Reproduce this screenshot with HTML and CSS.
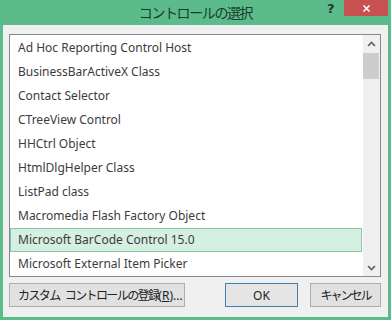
FILE: index.html
```html
<!DOCTYPE html>
<html lang="ja">
<head>
<meta charset="utf-8">
<link rel="stylesheet" href="styles.css">
</head>
<body>
<div class="window">
  <div class="titlebar">
    <div class="title">コントロールの選択</div>
    <div class="help">?</div>
    <div class="close">
      <svg width="12" height="12" viewBox="0 0 12 12"><path d="M2 2 L10 10 M10 2 L2 10" stroke="#fff" stroke-width="2" fill="none"/></svg>
    </div>
  </div>
  <div class="client">
    <div class="listbox">
      <ul class="items">
        <li>Ad Hoc Reporting Control Host</li>
        <li>BusinessBarActiveX Class</li>
        <li>Contact Selector</li>
        <li>CTreeView Control</li>
        <li>HHCtrl Object</li>
        <li>HtmlDlgHelper Class</li>
        <li>ListPad class</li>
        <li>Macromedia Flash Factory Object</li>
        <li class="selected">Microsoft BarCode Control 15.0</li>
        <li>Microsoft External Item Picker</li>
      </ul>
      <div class="scrollbar">
        <div class="arrow">
          <svg width="9" height="6" viewBox="0 0 9 6"><path d="M1 5 L4.5 1.5 L8 5" stroke="#606060" stroke-width="1.6" fill="none"/></svg>
        </div>
        <div class="track"><div class="thumb"></div></div>
        <div class="arrow">
          <svg width="9" height="6" viewBox="0 0 9 6"><path d="M1 1 L4.5 4.5 L8 1" stroke="#606060" stroke-width="1.6" fill="none"/></svg>
        </div>
      </div>
    </div>
    <div class="buttons">
      <button class="btn custom"><span class="jp">カスタム</span> <span class="jp">コントロールの登録</span>(<u>R</u>)...</button>
      <div class="spacer"></div>
      <button class="btn ok">OK</button>
      <button class="btn cancel"><span class="jp">キャンセル</span></button>
    </div>
  </div>
</div>
</body>
</html>
```
FILE: styles.css
```css
html, body {
  margin: 0;
  padding: 0;
}
body {
  width: 391px;
  height: 320px;
  background: #5bbb8b;
  font-family: "Noto Sans", "Noto Sans CJK JP", sans-serif;
  overflow: hidden;
}
.window {
  display: flex;
  flex-direction: column;
  height: 320px;
}
.titlebar {
  position: relative;
  height: 25px;
  flex: none;
}
.title {
  text-align: center;
  font-family: "Noto Sans CJK JP", sans-serif;
  font-size: 14px;
  letter-spacing: -1.4px;
  line-height: 25px;
  color: #1e3a2c;
}
.help {
  position: absolute;
  left: 327px;
  top: 2px;
  font-family: "DejaVu Sans", sans-serif;
  font-weight: bold;
  font-size: 13px;
  line-height: 13px;
  color: #1d3a2a;
}
.close {
  position: absolute;
  left: 344px;
  top: 0;
  width: 44px;
  height: 16px;
  background: #c75050;
  display: flex;
  align-items: center;
  justify-content: center;
}
.close svg {
  width: 9px;
  height: 9px;
}
.client {
  flex: 1;
  margin: 0 3px 3px 3px;
  background: #f0f0f0;
  padding: 9px 7px 10px 6px;
  display: flex;
  flex-direction: column;
  gap: 6px;
}
.listbox {
  height: 243px;
  box-sizing: border-box;
  border: 1px solid #828790;
  background: #fff;
  display: flex;
  overflow: hidden;
}
.items {
  list-style: none;
  margin: 0;
  padding: 1px 0 0 0;
  flex: 1;
}
.items li {
  height: 24px;
  box-sizing: border-box;
  line-height: 22px;
  padding-left: 7px;
  font-size: 12px;
  color: #3c3c3c;
  border: 1px solid transparent;
  white-space: nowrap;
}
.items li.selected {
  background: #d5efe0;
  border-color: #8dc6a6;
  margin-right: 1px;
}
.scrollbar {
  width: 17px;
  background: #f0f0f0;
  display: flex;
  flex-direction: column;
  flex: none;
}
.arrow {
  height: 17px;
  display: flex;
  align-items: center;
  justify-content: center;
  flex: none;
}
.track {
  flex: 1;
  padding: 1px 1px 0 0;
}
.thumb {
  height: 26px;
  background: #cdcdcd;
}
.buttons {
  display: flex;
  gap: 12px;
  height: 24px;
}
.spacer {
  flex: 1;
}
.btn {
  height: 24px;
  box-sizing: border-box;
  border: 1px solid #adadad;
  background: #e1e1e1;
  font-family: "Noto Sans", "Noto Sans CJK JP", sans-serif;
  font-size: 12px;
  color: #222;
  padding: 0;
  margin: 0;
  white-space: nowrap;
}
.btn .jp {
  font-family: "Noto Sans CJK JP", sans-serif;
  letter-spacing: -1.6px;
}
.custom {
  width: 176px;
  text-align: left;
  padding-left: 8px;
  word-spacing: 2px;
}
.ok {
  width: 73px;
  border-color: #3c7fb1;
  background: #e5e5e5;
}
.cancel {
  width: 71px;
}
.cancel .jp {
  letter-spacing: -2px;
}
.btn u {
  text-decoration: underline;
}
```
